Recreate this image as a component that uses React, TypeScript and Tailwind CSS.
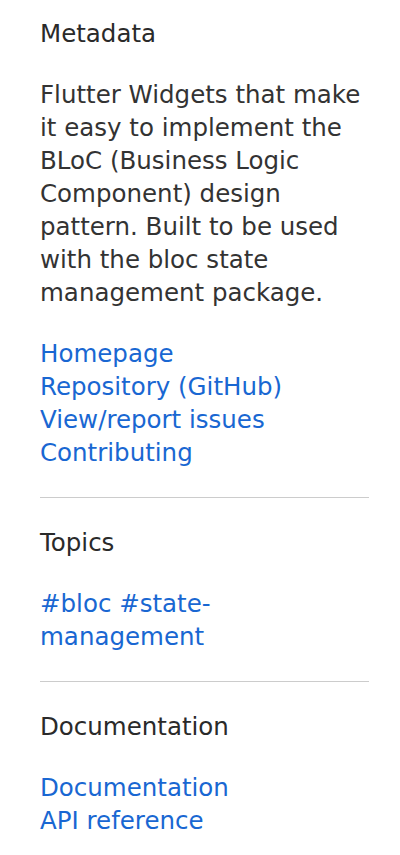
import React from "react";

type Link = { label: string; href: string };

const infoLinks: Link[] = [
  { label: "Homepage", href: "#" },
  { label: "Repository (GitHub)", href: "#" },
  { label: "View/report issues", href: "#" },
  { label: "Contributing", href: "#" },
];

const docLinks: Link[] = [
  { label: "Documentation", href: "#" },
  { label: "API reference", href: "#" },
];

function Heading({ children }: { children: React.ReactNode }) {
  return <h3 className="font-normal text-[#2a2a2a]">{children}</h3>;
}

function LinkList({ links }: { links: Link[] }) {
  return (
    <div className="flex flex-col">
      {links.map((l) => (
        <a key={l.label} href={l.href} className="text-[#1967d2]">
          {l.label}
        </a>
      ))}
    </div>
  );
}

function Divider() {
  return <hr className="border-0 border-t border-[#cccccc]" />;
}

export default function App() {
  return (
    <div
      className="min-h-[855px] bg-white pl-10 pt-[17px]"
      style={{ fontFamily: "'DejaVu Sans', 'Noto Sans', sans-serif" }}
    >
      <aside className="w-[329px] flex flex-col gap-7 text-[24.5px] leading-[33px]">
        <Heading>Metadata</Heading>
        <p className="text-[#333333]">
          Flutter Widgets that make it easy to implement the BLoC (Business
          Logic Component) design pattern. Built to be used with the bloc state
          management package.
        </p>
        <LinkList links={infoLinks} />
        <Divider />
        <Heading>Topics</Heading>
        {/* ein Link-Block, damit der Umbruch am Bindestrich sauber bleibt */}
        <a href="#" className="text-[#1967d2]">
          #bloc #state-management
        </a>
        <Divider />
        <Heading>Documentation</Heading>
        <LinkList links={docLinks} />
      </aside>
    </div>
  );
}
